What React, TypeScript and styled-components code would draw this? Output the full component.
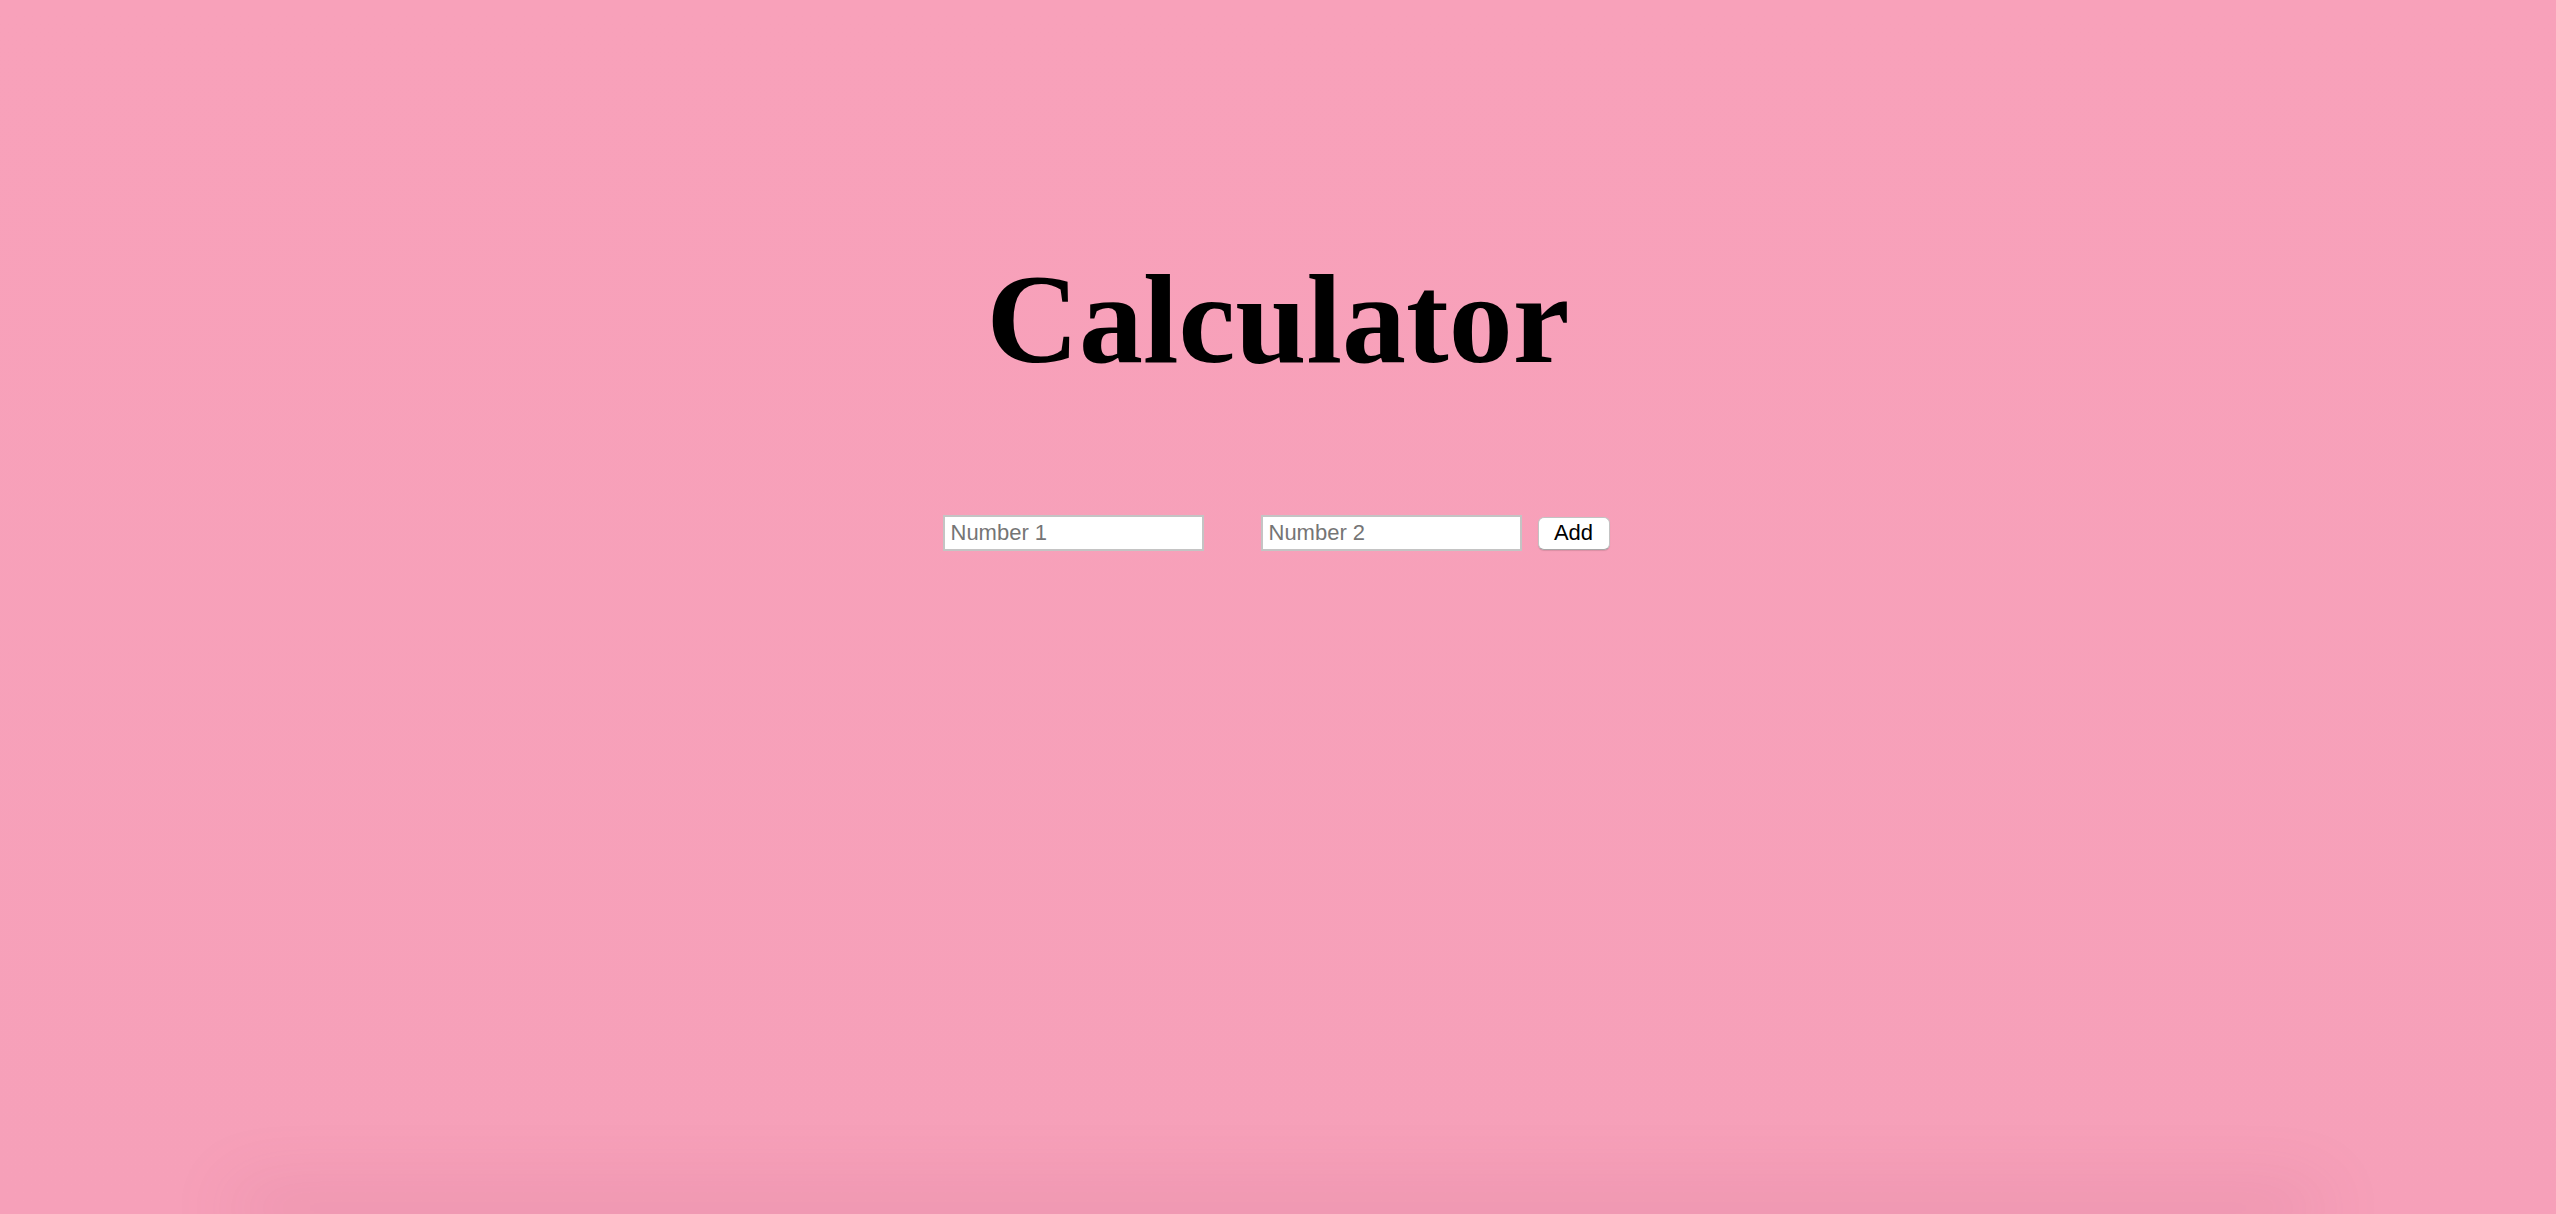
import React from "react";
import styled, { createGlobalStyle } from "styled-components";

const Global = createGlobalStyle`
  html, body {
    margin: 0;
    padding: 0;
    background: #f8a1ba;
  }
  #root {
    min-height: 100vh;
  }
`;

const Page = styled.div`
  height: 100vh;
  overflow: hidden;
  display: flex;
  flex-direction: column;
  align-items: center;
  background: linear-gradient(#f8a1ba, #f6a0b9);
`;

const Title = styled.h1`
  margin: 255px 0 0;
  font-family: "Liberation Serif", "Times New Roman", serif;
  font-weight: 700;
  font-size: 128px;
  line-height: 128px;
  color: #000;
  text-align: center;
`;

const Form = styled.div`
  margin-top: 132px;
  margin-right: 4px;
  display: flex;
  align-items: center;
`;

const NumberInput = styled.input<{ $gapAfter: number }>`
  box-sizing: border-box;
  width: 261px;
  height: 36px;
  margin: 0 ${(p) => p.$gapAfter}px 0 0;
  padding: 0 6px;
  border: 2px solid #c4c4c4;
  background: #fff;
  font-family: "Liberation Sans", Arial, sans-serif;
  font-size: 22px;
  color: #000;
  outline: none;
  &::placeholder {
    color: #757575;
  }
`;

const AddButton = styled.button`
  box-sizing: border-box;
  width: 72px;
  height: 33px;
  padding: 0;
  border: 1px solid #c3c3c3;
  border-bottom-color: #a8a8a8;
  border-radius: 6px;
  background: #fff;
  font-family: "Liberation Sans", Arial, sans-serif;
  font-size: 22px;
  color: #000;
  box-shadow: 0 1px 1px rgba(0, 0, 0, 0.12);
`;

const Sheet = styled.div`
  margin-top: auto;
  flex-shrink: 0;
  width: 2060px;
  height: 0;
  box-shadow: 0 -6px 70px 12px rgba(170, 60, 100, 0.22);
`;

export default function App() {
  return (
    <>
      <Global />
      <Page>
        <Title>Calculator</Title>
        <Form>
          <NumberInput type="text" placeholder="Number 1" $gapAfter={57} />
          <NumberInput type="text" placeholder="Number 2" $gapAfter={16} />
          <AddButton type="button">Add</AddButton>
        </Form>
        <Sheet />
      </Page>
    </>
  );
}
